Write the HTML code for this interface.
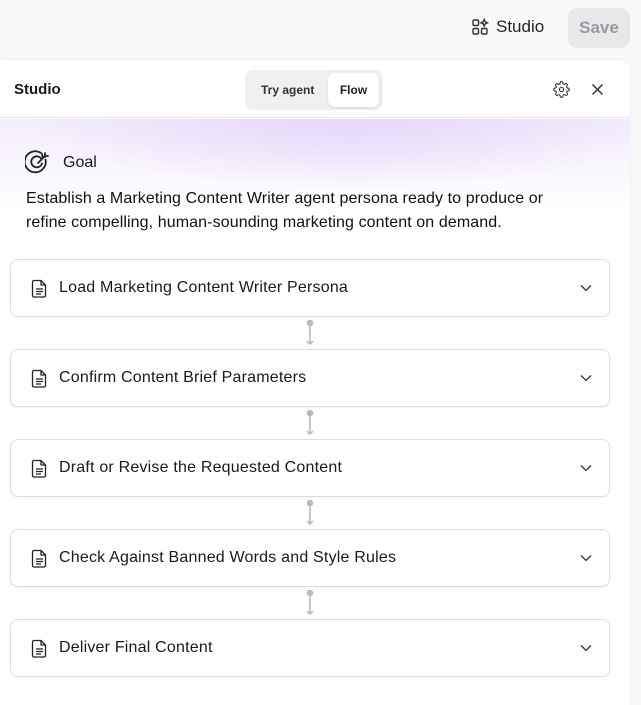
<!DOCTYPE html>
<html><head><style>
*{box-sizing:border-box;margin:0;padding:0}
body{width:641px;height:705px;overflow:hidden;background:#f9f9fa;font-family:"Liberation Sans",sans-serif;color:#1a1a1a;position:relative}
.top{position:absolute;top:0;left:0;right:0;height:60px}
.studio{position:absolute;left:471px;top:17px;font-size:17px;display:flex;align-items:center;gap:7px;color:#222}
.save{position:absolute;left:568px;top:8px;width:62px;height:40px;background:#e8e8ea;border-radius:9px;color:#9a9a9e;font-weight:bold;font-size:17px;display:flex;align-items:center;justify-content:center}
.panel{position:absolute;left:0;top:60px;width:630px;height:645px;background:#fff;border-radius:0 10px 0 0;box-shadow:0 0 3px rgba(0,0,0,.06)}
.hdr{height:58px;border-bottom:1px solid #e6e6ea;position:relative}
.hdr .t{position:absolute;left:14px;top:21px;font-size:15px;font-weight:bold}
.seg{position:absolute;left:245px;top:10px;width:138px;height:40px;background:#f0f0f2;border-radius:8px}
.seg .a{position:absolute;left:16px;top:13px;font-size:12px;font-weight:bold;color:#333}
.seg .b{position:absolute;left:83px;top:3px;width:51px;height:34px;background:#fff;border-radius:7px;box-shadow:0 1px 3px rgba(0,0,0,.1);font-size:12px;font-weight:bold;text-align:center;line-height:34px;color:#222}
.grad{position:absolute;left:0;top:59px;width:630px;height:90px;background:radial-gradient(ellipse 320px 70px at 350px 0,#e5d7f9,rgba(255,255,255,0) 100%),linear-gradient(#f3ecfc,#fff)}
.goal{position:absolute;left:25px;top:90px;display:flex;align-items:center;gap:12px;font-size:16px}
.desc{position:absolute;left:26px;top:127px;font-size:16px;line-height:24px;width:555px;color:#111;letter-spacing:.1px}
.card{position:absolute;left:10px;width:600px;height:58px;border:1px solid #dedee2;border-radius:8px;background:#fff;box-shadow:0 1px 2px rgba(0,0,0,.05);display:flex;align-items:center;font-size:16px;color:#1a1a1a;letter-spacing:.2px}
.card svg.d{margin-left:20px;margin-right:11px}
.card svg.c{position:absolute;right:17px;top:24px}
.conn{position:absolute;left:306px;width:8px;height:26px}
</style></head><body>
<div class="top">
<div class="studio"><svg width="18" height="18" viewBox="0 0 18 18" fill="none" stroke="#333" stroke-width="1.4"><rect x="2" y="2" width="5.5" height="5.5" rx="1.3"/><rect x="2" y="10.5" width="5.5" height="5.5" rx="1.3"/><rect x="10.5" y="10.5" width="5.5" height="5.5" rx="1.3"/><path d="M13.2 1.5l1 2.3 2.3 1-2.3 1-1 2.3-1-2.3-2.3-1 2.3-1z"/></svg>Studio</div>
<div class="save">Save</div>
</div>
<div class="panel">
<div class="hdr"><div class="t">Studio</div>
<div class="seg"><span class="a">Try agent</span><span class="b">Flow</span></div>
<svg style="position:absolute;left:553px;top:21px" width="17" height="17" viewBox="0 0 24 24" fill="none" stroke="#333" stroke-width="1.5"><circle cx="12" cy="12" r="3"/><path d="M19.4 15a1.65 1.65 0 0 0 .33 1.820l.06.06a2 2 0 1 1-2.830 2.830l-.06-.06a1.65 1.65 0 0 0-1.820-.33 1.65 1.65 0 0 0-1 1.510V21a2 2 0 1 1-4 0v-.09A1.650 1.650 0 0 0 9 19.4a1.65 1.65 0 0 0-1.82.33l-.06.06a2 2 0 1 1-2.83-2.83l.06-.06A1.65 1.65 0 0 0 4.68 15a1.65 1.65 0 0 0-1.51-1H3a2 2 0 1 1 0-4h.09A1.65 1.65 0 0 0 4.6 9a1.65 1.65 0 0 0-.33-1.82l-.06-.06a2 2 0 1 1 2.83-2.83l.06.06A1.65 1.65 0 0 0 9 4.68 1.65 1.65 0 0 0 10 3.17V3a2 2 0 1 1 4 0v.09a1.65 1.65 0 0 0 1 1.51 1.65 1.65 0 0 0 1.82-.33l.06-.06a2 2 0 1 1 2.83 2.83l-.06.06A1.65 1.65 0 0 0 19.4 9a1.65 1.65 0 0 0 1.51 1H21a2 2 0 1 1 0 4h-.09a1.65 1.65 0 0 0-1.51 1z"/></svg>
<svg style="position:absolute;left:591px;top:23px" width="13" height="13" viewBox="0 0 13 13" stroke="#333" stroke-width="1.5"><path d="M1.5 1.5l10 10M11.5 1.5l-10 10"/></svg>
</div>
<div class="grad"></div>
<div class="goal"><svg width="26" height="26" viewBox="0 0 26 26" fill="none" stroke="#222" stroke-width="1.8" stroke-linecap="round"><path d="M20.5 9.5A10.5 10.5 0 1 1 16 3"/><path d="M16.5 9A5.5 5.5 0 1 0 17 13.5"/><path d="M13 13l7-7M17 4l.5 2.5 2.5.5M20 3v3h3"/></svg>Goal</div>
<div class="desc">Establish a Marketing Content Writer agent persona ready to produce or refine compelling, human-sounding marketing content on demand.</div>
</div>
<div id="cards"></div>
<script>
var t=["Load Marketing Content Writer Persona","Confirm Content Brief Parameters","Draft or Revise the Requested Content","Check Against Banned Words and Style Rules","Deliver Final Content"];
var h="";
t.forEach(function(s,i){var y=259+i*90;
h+='<div class="card" style="top:'+y+'px"><svg class="d" width="17" height="19" viewBox="0 0 17 19" fill="none" stroke="#222" stroke-width="1.3" stroke-linejoin="round"><path d="M3 1.5h7l4.5 4.5v10.5a1.5 1.5 0 0 1-1.5 1.5H3a1.5 1.5 0 0 1-1.5-1.5v-13.5A1.5 1.5 0 0 1 3 1.5z"/><path d="M10 1.5V6h4.5M5 10h7M5 12.5h7M5 15h5"/></svg>'+s+'<svg class="c" width="12" height="8" viewBox="0 0 12 8" fill="none" stroke="#333" stroke-width="1.3"><path d="M1 1.5l5 5 5-5"/></svg></div>';
if(i<4)h+='<svg class="conn" style="top:'+(y+61)+'px" viewBox="0 0 8 26" stroke="#bbb" stroke-width="1.6" fill="#bbb"><path d="M4 3v20"/><circle cx="4" cy="3" r="2.5"/><path d="M1 21l3 3 3-3" fill="none"/></svg>';});
document.getElementById("cards").innerHTML=h;
</script>
</body></html>
